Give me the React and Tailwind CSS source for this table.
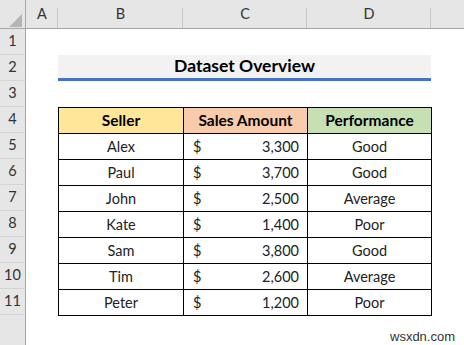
import React from "react";

const rows = [
  { name: "Alex", amount: "3,300", perf: "Good" },
  { name: "Paul", amount: "3,700", perf: "Good" },
  { name: "John", amount: "2,500", perf: "Average" },
  { name: "Kate", amount: "1,400", perf: "Poor" },
  { name: "Sam", amount: "3,800", perf: "Good" },
  { name: "Tim", amount: "2,600", perf: "Average" },
  { name: "Peter", amount: "1,200", perf: "Poor" },
];

const font = { fontFamily: "Lato, 'Open Sans', sans-serif" };

function RowNum({ n }) {
  return (
    <div className="w-[26px] h-[26px] shrink-0 bg-[#e6e6e6] border-r border-r-[#a6a6a6] border-b border-b-[#d4d4d4] flex items-end justify-center pb-[2px] text-[14.5px] text-[#333]">
      {n}
    </div>
  );
}

function ColHead({ label, w }) {
  return (
    <div className={`${w} h-full shrink-0 relative flex items-end justify-center pb-[3px] text-[14.5px] text-[#333]`}>
      {label}
      <div className="absolute right-0 top-[8px] bottom-0 w-px bg-[#c8c8c8]" />
    </div>
  );
}

export default function App() {
  return (
    <div className="w-[464px] h-[345px] bg-white overflow-hidden relative" style={font}>
      {/* column headers */}
      <div className="flex h-[29px] bg-[#e6e6e6] border-b border-[#a6a6a6]">
        <div className="w-[26px] h-full shrink-0 relative border-r border-[#a6a6a6]">
          <svg className="absolute left-[9px] top-[14px]" width="13" height="13" viewBox="0 0 13 13">
            <polygon points="13,0 13,13 0,13" fill="#b5b5b5" />
          </svg>
        </div>
        <ColHead label="A" w="w-[32px]" />
        <ColHead label="B" w="w-[125px]" />
        <ColHead label="C" w="w-[124px]" />
        <ColHead label="D" w="w-[124px]" />
        <div className="flex-1" />
      </div>

      <div className="flex">
        <div className="flex flex-col">
          {[1, 2, 3, 4, 5, 6, 7, 8, 9, 10, 11].map((n) => (
            <RowNum key={n} n={n} />
          ))}
          <div className="w-[26px] h-[40px] bg-[#e6e6e6] border-r border-[#a6a6a6]" />
        </div>

        <div className="flex flex-col pl-[32px]">
          <div className="h-[26px]" />
          {/* title */}
          <div className="w-[373px] h-[26px] bg-[#f2f2f2] border-b-[3px] border-[#4472c4] flex items-center justify-center font-bold text-[17.5px] text-black">
            Dataset Overview
          </div>
          <div className="h-[26px]" />

          {/* table */}
          <div className="w-[374px] border-l border-t border-black text-black">
            <div className="flex h-[26px] font-bold text-[15.5px]">
              <div className="w-[125px] bg-[#ffe699] border-r border-b border-black flex items-center justify-center">Seller</div>
              <div className="w-[124px] bg-[#f8cbad] border-r border-b border-black flex items-center justify-center">Sales Amount</div>
              <div className="w-[124px] bg-[#c6e0b4] border-r border-b border-black flex items-center justify-center">Performance</div>
            </div>
            {rows.map((r) => (
              <div key={r.name} className="flex h-[26px] text-[14.5px] text-[#222]">
                <div className="w-[125px] border-r border-b border-black flex items-center justify-center">{r.name}</div>
                <div className="w-[124px] border-r border-b border-black flex items-center justify-between pl-[9px] pr-[8px]">
                  <span>$</span>
                  <span>{r.amount}</span>
                </div>
                <div className="w-[124px] border-r border-b border-black flex items-center justify-center">{r.perf}</div>
              </div>
            ))}
          </div>
        </div>
      </div>

      <div className="absolute left-[390px] top-[327px] text-[13px] text-[#333]" style={{ fontFamily: "'Liberation Sans', Arial, sans-serif" }}>
        wsxdn.com
      </div>
    </div>
  );
}
